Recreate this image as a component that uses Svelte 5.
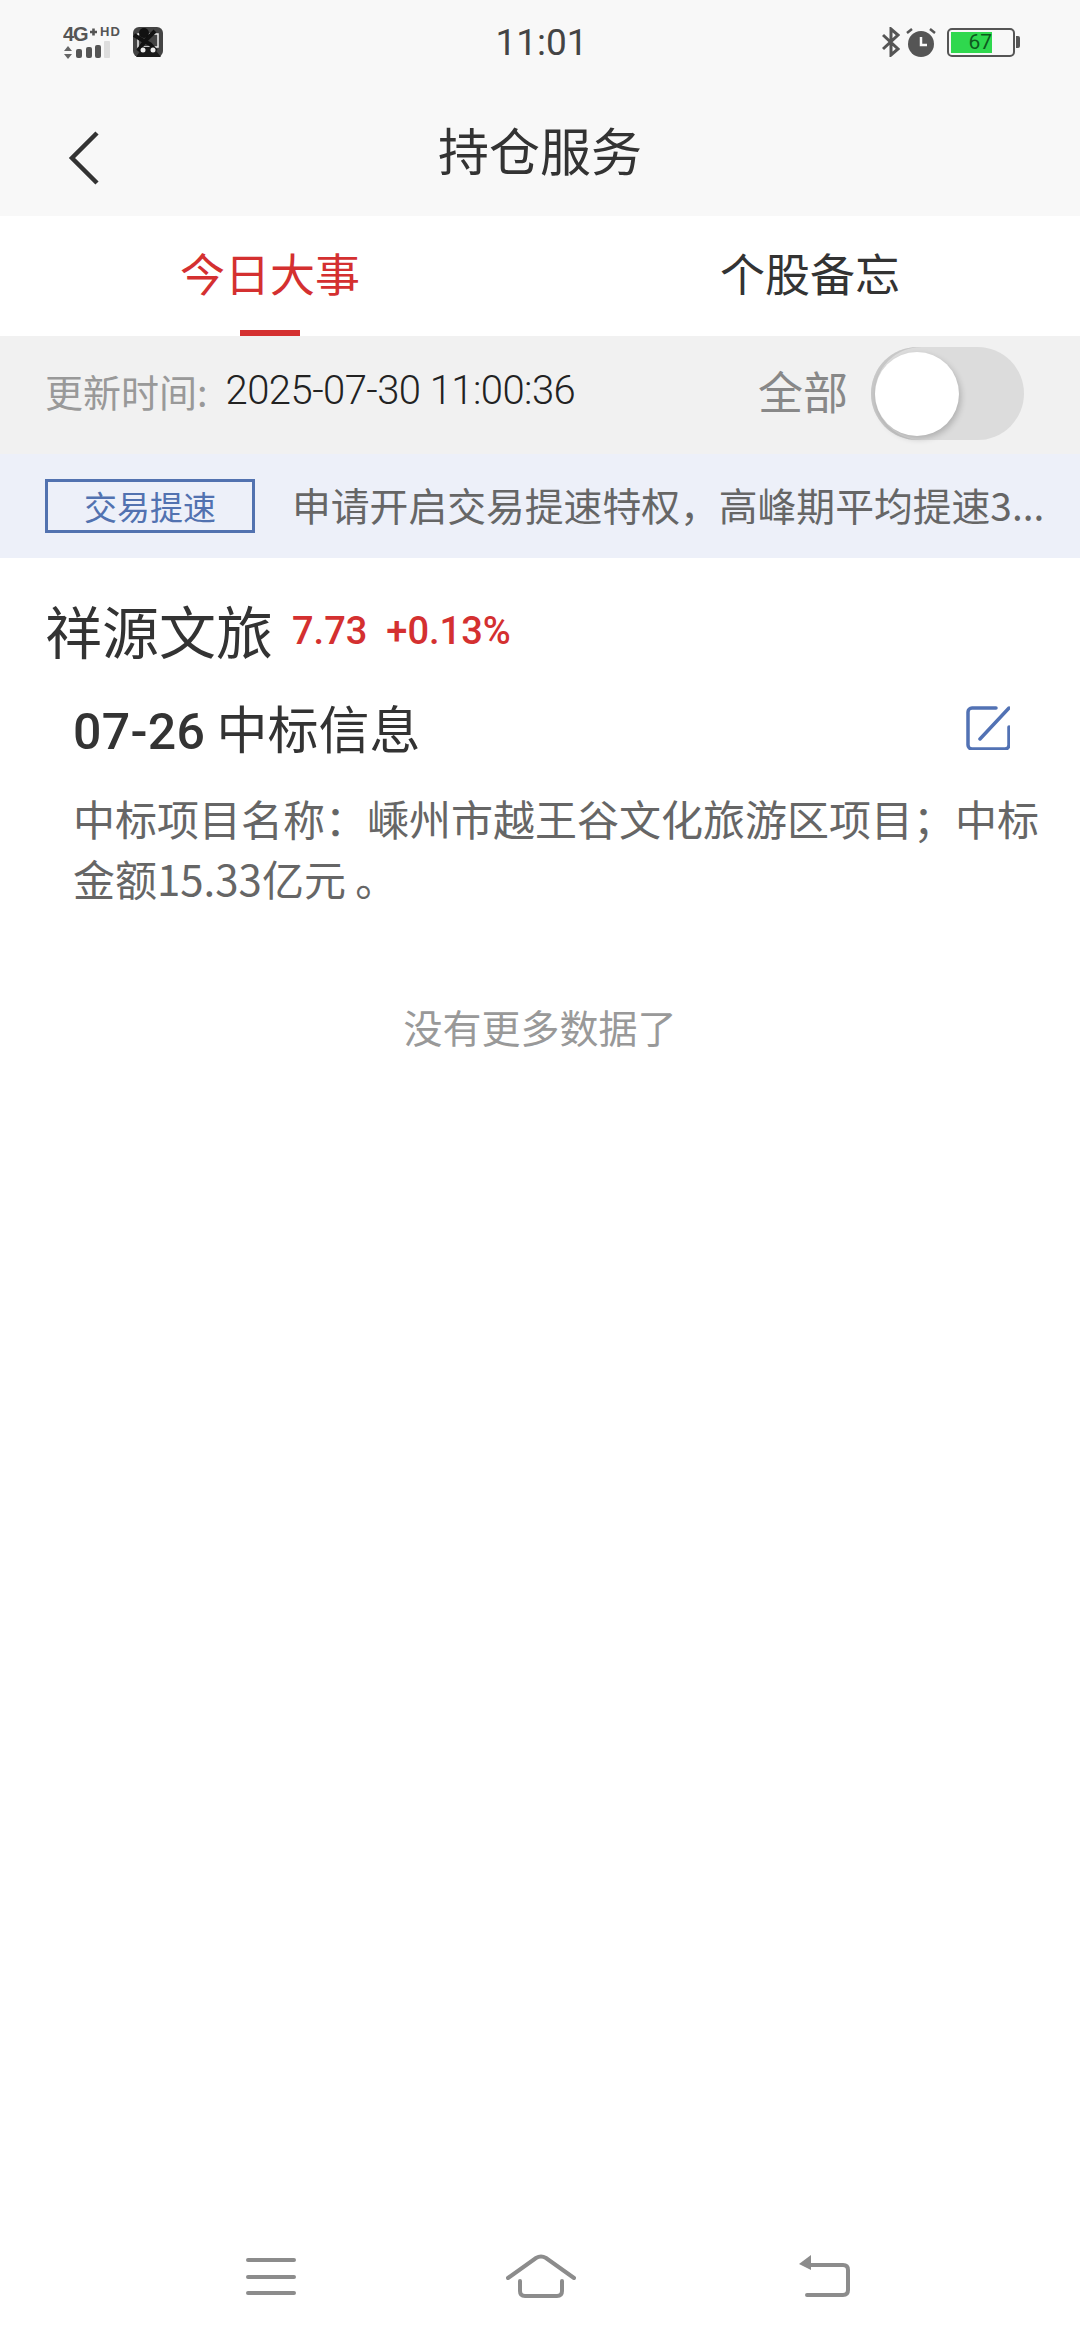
<script lang="ts">
  const tabs = [
    { label: "今日大事", active: true },
    { label: "个股备忘", active: false },
  ];
</script>

<div class="page">
  <header class="top">
    <div class="status">
      <div class="status-left">
        <svg class="signal" viewBox="0 -5 60 38" width="60" height="38">
          <text x="0" y="15" class="net">4G</text>
          <path d="M27 6h7M30.500 2.500v7" stroke="#555" stroke-width="2.600" />
          <text x="37" y="10" class="hd">HD</text>
          <path d="M5 20l4 5H1zM1 28h8l-4 5z" fill="#666" />
          <rect x="13" y="23" width="6" height="9" rx="2" fill="#555" />
          <rect x="23" y="21" width="6" height="11" rx="2" fill="#555" />
          <rect x="32" y="19" width="6" height="13" rx="2" fill="#555" />
          <rect x="41" y="15" width="6" height="17" rx="1" fill="#ddd" />
        </svg>
        <svg viewBox="0 0 30 30" width="30" height="30">
          <rect width="30" height="30" rx="6" fill="#444" />
          <rect x="5" y="7" width="20" height="13" fill="none" stroke="#eee" stroke-width="1.500" />
          <circle cx="11" cy="6" r="5" fill="#111" />
          <path d="M1 8l8 5 8 4 6 7M22 4L12 14l-7 10" stroke="#111" stroke-width="4" fill="none" />
          <path d="M3 30l7-10h10l8 10z" fill="#1a1a1a" />
          <circle cx="10" cy="23" r="2.500" fill="#eee" />
          <circle cx="20" cy="23" r="2.500" fill="#eee" />
        </svg>
      </div>
      <span class="clock">11:01</span>
      <div class="status-right">
        <svg viewBox="0 0 18 30" width="18" height="30">
          <path d="M1 8l15 14-7 6V2l7 6L1 22" fill="none" stroke="#555" stroke-width="3" />
        </svg>
        <svg viewBox="0 0 30 30" width="30" height="30">
          <circle cx="15" cy="17" r="13" fill="#555" />
          <path d="M15 10v8h6" fill="none" stroke="#f8f8f8" stroke-width="2.500" />
          <path d="M1 6l5-4M29 6l-5-4" stroke="#555" stroke-width="2.500" />
        </svg>
        <div class="battery">
          <div class="battery-body">
            <div class="battery-fill"><span>67</span></div>
          </div>
          <div class="battery-cap"></div>
        </div>
      </div>
    </div>
    <div class="titlebar">
      <svg class="back" viewBox="0 0 32 54" width="32" height="54">
        <path d="M29 2L4 27l25 25" fill="none" stroke="#333" stroke-width="4.500" />
      </svg>
      <h1>持仓服务</h1>
    </div>
  </header>

  <nav class="tabs">
    {#each tabs as tab}
      <div class="tab" class:active={tab.active}>{tab.label}</div>
    {/each}
  </nav>

  <div class="update-row">
    <div class="update-time"><span class="muted">更新时间:</span><span class="stamp">2025-07-30 11:00:36</span></div>
    <div class="filter">
      <span>全部</span>
      <div class="switch"><div class="knob"></div></div>
    </div>
  </div>

  <div class="banner">
    <span class="tag">交易提速</span>
    <span class="banner-text">申请开启交易提速特权，高峰期平均提速3...</span>
  </div>

  <section class="stock">
    <div class="stock-head">
      <span class="stock-name">祥源文旅</span>
      <span class="stock-price">7.73</span>
      <span class="stock-change">+0.13%</span>
    </div>
    <div class="event">
      <div class="event-head">
        <span class="event-title"><span class="event-date">07-26</span> 中标信息</span>
        <svg viewBox="0 0 44 44" width="44" height="44">
          <path d="M30 2H6a4 4 0 0 0-4 4v33a4 4 0 0 0 4 4h33a4 4 0 0 0 4-4V21" fill="none" stroke="#5272b4" stroke-width="3.500" stroke-linecap="round" />
          <path d="M14 33L43 2" fill="none" stroke="#5272b4" stroke-width="3.500" stroke-linecap="round" />
        </svg>
      </div>
      <p class="event-body">中标项目名称：嵊州市越王谷文化旅游区项目；中标金额15.33亿元 。</p>
    </div>
  </section>

  <div class="no-more">没有更多数据了</div>

  <footer class="navbar">
    <svg viewBox="0 0 50 38" width="50" height="38">
      <path d="M2 3h46M2 20h46M2 36h46" stroke="#8c8c8c" stroke-width="4" stroke-linecap="round" />
    </svg>
    <svg class="home" viewBox="0 0 70 44" width="70" height="44">
      <path d="M2 24L30 4q5-3 10 0l28 20" fill="none" stroke="#8c8c8c" stroke-width="4" stroke-linecap="round" />
      <path d="M14 27v10q0 5 5 5h32q5 0 5-5V27" fill="none" stroke="#8c8c8c" stroke-width="4" stroke-linecap="round" />
    </svg>
    <svg viewBox="0 0 52 42" width="52" height="42">
      <path d="M13 0v15L1 9z" fill="#8c8c8c" />
      <path d="M10 10h35q5 0 5 5v20q0 5-5 5H9" fill="none" stroke="#8c8c8c" stroke-width="4" stroke-linecap="round" />
    </svg>
  </footer>
</div>

<style>
  :global(body) {
    margin: 0;
    background: #fff;
  }

  .page {
    width: 1080px;
    height: 2340px;
    display: flex;
    flex-direction: column;
    font-family: "Noto Sans CJK SC", "Noto Sans", sans-serif;
    color: #333;
    overflow: hidden;
  }

  .top {
    background: #f8f8f8;
    height: 216px;
  }

  .status {
    height: 84px;
    display: grid;
    grid-template-columns: 1fr auto 1fr;
    align-items: center;
    padding: 0 60px 0 63px;
  }

  .status-left {
    display: flex;
    align-items: center;
    gap: 10px;
  }

  .signal {
    margin-top: -5px;
  }

  .net {
    font: 700 20px "Liberation Sans", sans-serif;
    letter-spacing: -1px;
    fill: #555;
  }

  .hd {
    font: 700 13px "Liberation Sans", sans-serif;
    letter-spacing: 1px;
    fill: #555;
  }

  .clock {
    font: 400 37px Roboto, sans-serif;
    color: #444;
  }

  .status-right {
    display: flex;
    align-items: center;
    justify-content: flex-end;
    gap: 6px;
  }

  .battery {
    display: flex;
    align-items: center;
    margin-left: 5px;
  }

  .battery-body {
    width: 68px;
    height: 29px;
    box-sizing: border-box;
    border: 2px solid #555;
    border-radius: 5px;
    padding: 2px;
  }

  .battery-fill {
    width: 41px;
    height: 100%;
    background: #2fd84e;
    display: flex;
    align-items: center;
    justify-content: flex-end;
  }

  .battery-fill span {
    font: 400 21px Roboto, sans-serif;
    color: #0d5a1e;
  }

  .battery-cap {
    width: 4px;
    height: 12px;
    margin-left: 1px;
    background: #555;
    border-radius: 0 2px 2px 0;
  }

  .titlebar {
    position: relative;
    height: 132px;
    display: flex;
    align-items: center;
    justify-content: center;
  }

  .back {
    position: absolute;
    left: 68px;
    top: 47px;
  }

  h1 {
    margin: 0 0 2px;
    font-size: 51px;
    font-weight: 400;
    color: #333;
  }

  .tabs {
    height: 120px;
    display: grid;
    grid-template-columns: 1fr 1fr;
    background: #fff;
  }

  .tab {
    position: relative;
    display: flex;
    align-items: center;
    justify-content: center;
    padding-bottom: 8px;
    box-sizing: border-box;
    font-size: 45px;
    color: #333;
  }

  .tab.active {
    color: #d43030;
  }

  .tab.active::after {
    content: "";
    position: absolute;
    left: 240px;
    bottom: 0;
    width: 60px;
    height: 6px;
    background: #d43030;
  }

  .update-row {
    height: 118px;
    background: #f1f1f1;
    display: flex;
    align-items: center;
    justify-content: space-between;
    padding: 0 56px 0 45px;
  }

  .update-time {
    display: flex;
    align-items: center;
    gap: 18px;
    margin-top: -10px;
    white-space: nowrap;
  }

  .muted {
    color: #999;
    font-size: 38px;
  }

  .stamp {
    font-family: Roboto, sans-serif;
    font-weight: 300;
    color: #222;
    font-size: 40px;
    letter-spacing: -0.55px;
  }

  .filter {
    display: flex;
    align-items: center;
    gap: 23px;
    font-size: 45px;
    color: #888;
  }

  .filter span {
    margin-top: -10px;
  }

  .switch {
    width: 153px;
    height: 93px;
    box-sizing: border-box;
    margin-top: -3px;
    padding: 5px 4px;
    border-radius: 47px;
    background: #dcdcdc;
    box-shadow: inset 4px 0 0 #c8c8c8;
  }

  .knob {
    width: 84px;
    height: 84px;
    border-radius: 50%;
    background: #fff;
    box-shadow: 2px 3px 6px rgba(0, 0, 0, 0.2);
  }

  .banner {
    height: 104px;
    background: #edf0f9;
    display: flex;
    align-items: center;
    padding-left: 45px;
    gap: 37px;
  }

  .tag {
    width: 210px;
    height: 54px;
    box-sizing: border-box;
    border: 3px solid #5272b0;
    color: #5272b0;
    font-size: 33px;
    display: flex;
    align-items: center;
    justify-content: center;
  }

  .banner-text {
    margin-top: -5px;
    font-size: 38.8px;
    color: #666;
    white-space: nowrap;
  }

  .stock {
    padding: 36px 40px 0 45px;
  }

  .stock-head {
    height: 76px;
    display: flex;
    align-items: center;
  }

  .stock-name {
    margin-top: -6px;
    font-size: 57px;
    color: #333;
    margin-right: 19px;
  }

  .stock-price,
  .stock-change {
    font: 500 38px Roboto, sans-serif;
    color: #d43030;
    margin-right: 19px;
    margin-top: -2px;
  }

  .event {
    padding: 20px 0 0 28px;
  }

  .event-head {
    height: 76px;
    padding-right: 30px;
    display: flex;
    align-items: center;
    justify-content: space-between;
  }

  .event-title {
    margin-top: -3px;
    font-size: 51px;
    color: #333;
  }

  .event-date {
    font-family: Roboto, sans-serif;
    font-size: 50px;
    font-weight: 500;
    letter-spacing: 0.3px;
  }

  .event-body {
    margin: 22px 0 0;
    font-size: 42px;
    line-height: 60px;
    color: #666;
  }

  .no-more {
    margin-top: 88px;
    text-align: center;
    font-size: 39px;
    line-height: 60px;
    color: #999;
  }

  .navbar {
    margin-top: auto;
    height: 128px;
    display: flex;
    align-items: center;
    padding-left: 246px;
  }

  .home {
    margin: 0 222px 0 210px;
  }
</style>
